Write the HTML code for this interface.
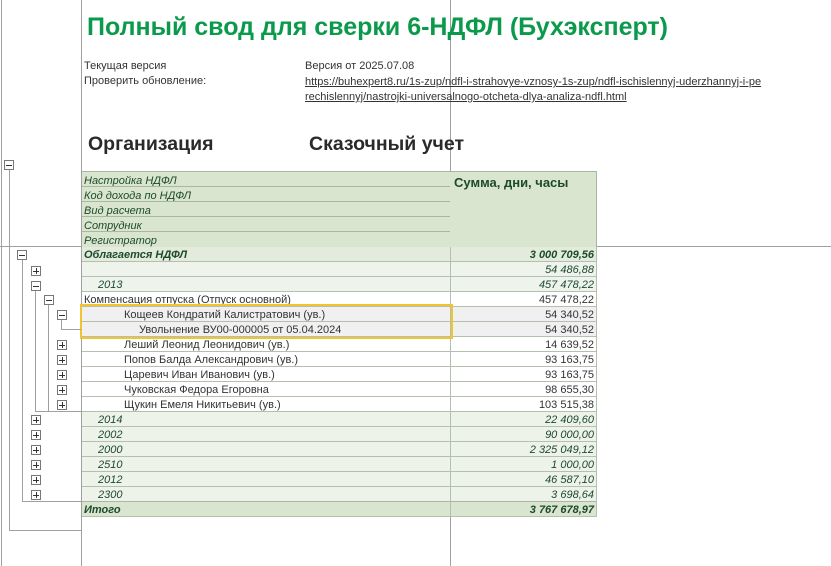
<!DOCTYPE html>
<html><head><meta charset="utf-8"><style>
body{margin:0;width:831px;height:566px;background:#fff;overflow:hidden;position:relative;font-family:"Liberation Sans",Arial,sans-serif;font-size:11px;color:#333}
.a{position:absolute}
.vl{position:absolute;width:1px;background:#a0a0a0}
.hl{position:absolute;height:1px;background:#a0a0a0}
.bx{position:absolute;width:8px;height:8px;border:1px solid #777;background:#fff}
.bx:before{content:"";position:absolute;left:1px;top:3.5px;width:6px;height:1px;background:#333}
.bx.p:after{content:"";position:absolute;left:3.5px;top:1px;width:1px;height:6px;background:#333}
.r{position:absolute;left:82px;width:514px;height:14px;border-bottom:1px solid #b4bfb0;line-height:15px;white-space:nowrap}
.r .l{position:absolute;left:2px;top:1px}
.r .v{position:absolute;right:2px;top:1px;text-align:right}
.r .s{position:absolute;left:368px;top:0;width:1px;height:15px;background:#b4bfb0}
.g{color:#1d4a2d;font-style:italic}
</style></head><body>
<div class="vl" style="left:1px;top:0;height:566px"></div>
<div class="vl" style="left:81px;top:0;height:566px"></div>
<div class="vl" style="left:450px;top:0;height:566px"></div>
<div class="hl" style="left:0;top:246px;width:831px"></div>

<div class="a" style="left:87px;top:13px;font-size:25px;font-weight:bold;color:#0b9a4b">Полный свод для сверки 6-НДФЛ (Бухэксперт)</div>
<div class="a" style="left:84px;top:60px">Текущая версия</div>
<div class="a" style="left:84px;top:75px">Проверить обновление:</div>
<div class="a" style="left:305px;top:60px">Версия от 2025.07.08</div>
<div class="a" style="left:305px;top:75px;text-decoration:underline;line-height:15px">https://buhexpert8.ru/1s-zup/ndfl-i-strahovye-vznosy-1s-zup/ndfl-ischislennyj-uderzhannyj-i-pe<br>rechislennyj/nastrojki-universalnogo-otcheta-dlya-analiza-ndfl.html</div>
<div class="a" style="left:88px;top:133px;font-size:19.5px;font-weight:bold;color:#2a2a2a">Организация</div>
<div class="a" style="left:309px;top:133px;font-size:19.5px;font-weight:bold;color:#2a2a2a">Сказочный учет</div>

<!-- header -->
<div class="a" style="left:82px;top:171px;width:514px;height:75px;background:#d9e5cf;border-top:1px solid #a9b5a5;border-right:1px solid #a9b5a5"></div>
<div class="a" style="left:454px;top:175px;font-size:13px;font-weight:bold;color:#1d4a2d">Сумма, дни, часы</div>
<div class="a g" style="left:84px;top:174px;line-height:15px">Настройка НДФЛ<br>Код дохода по НДФЛ<br>Вид расчета<br>Сотрудник<br>Регистратор</div>
<div class="hl" style="left:82px;top:186px;width:368px;background:#a9b5a5"></div>
<div class="hl" style="left:82px;top:201px;width:368px;background:#a9b5a5"></div>
<div class="hl" style="left:82px;top:216px;width:368px;background:#a9b5a5"></div>
<div class="hl" style="left:82px;top:231px;width:368px;background:#a9b5a5"></div>

<div class="r g" style="top:247px;background:#e3ecdc;font-weight:bold"><span class="l">Облагается НДФЛ</span><span class="s"></span><span class="v">3 000 709,56</span></div>
<div class="r g" style="top:262px;background:#eef4ec"><span class="s"></span><span class="v">54 486,88</span></div>
<div class="r g" style="top:277px;background:#eef4ec"><span class="l" style="left:16px">2013</span><span class="s"></span><span class="v">457 478,22</span></div>
<div class="r" style="top:292px"><span class="l">Компенсация отпуска (Отпуск основной)</span><span class="s"></span><span class="v">457 478,22</span></div>
<div class="r" style="top:307px;background:#f0f0f0"><span class="l" style="left:42px">Кощеев Кондратий Калистратович (ув.)</span><span class="s"></span><span class="v">54 340,52</span></div>
<div class="r" style="top:322px;background:#f0f0f0"><span class="l" style="left:57px">Увольнение ВУ00-000005 от 05.04.2024</span><span class="s"></span><span class="v">54 340,52</span></div>
<div class="r" style="top:337px"><span class="l" style="left:42px">Леший Леонид Леонидович (ув.)</span><span class="s"></span><span class="v">14 639,52</span></div>
<div class="r" style="top:352px"><span class="l" style="left:42px">Попов Балда Александрович (ув.)</span><span class="s"></span><span class="v">93 163,75</span></div>
<div class="r" style="top:367px"><span class="l" style="left:42px">Царевич Иван Иванович (ув.)</span><span class="s"></span><span class="v">93 163,75</span></div>
<div class="r" style="top:382px"><span class="l" style="left:42px">Чуковская Федора Егоровна</span><span class="s"></span><span class="v">98 655,30</span></div>
<div class="r" style="top:397px"><span class="l" style="left:42px">Щукин Емеля Никитьевич (ув.)</span><span class="s"></span><span class="v">103 515,38</span></div>
<div class="r g" style="top:412px;background:#eef3ea"><span class="l" style="left:16px">2014</span><span class="s"></span><span class="v">22 409,60</span></div>
<div class="r g" style="top:427px;background:#eef3ea"><span class="l" style="left:16px">2002</span><span class="s"></span><span class="v">90 000,00</span></div>
<div class="r g" style="top:442px;background:#eef3ea"><span class="l" style="left:16px">2000</span><span class="s"></span><span class="v">2 325 049,12</span></div>
<div class="r g" style="top:457px;background:#eef3ea"><span class="l" style="left:16px">2510</span><span class="s"></span><span class="v">1 000,00</span></div>
<div class="r g" style="top:472px;background:#eef3ea"><span class="l" style="left:16px">2012</span><span class="s"></span><span class="v">46 587,10</span></div>
<div class="r g" style="top:487px;background:#eef3ea"><span class="l" style="left:16px">2300</span><span class="s"></span><span class="v">3 698,64</span></div>
<div class="r g" style="top:501px;background:#d9e5cf;font-weight:bold;border-top:1px solid #a9b5a5"><span class="l">Итого</span><span class="s"></span><span class="v">3 767 678,97</span></div>
<div class="vl" style="left:596px;top:247px;height:270px;background:#b4bfb0"></div>

<div class="a" style="left:80px;top:304px;width:369px;height:31px;border:2px solid #f2c530"></div>

<!-- tree -->
<div class="vl" style="left:9px;top:169px;height:361px"></div>
<div class="hl" style="left:9px;top:530px;width:72px"></div>
<div class="bx" style="left:4px;top:160px"></div>
<div class="vl" style="left:22px;top:259px;height:242px"></div>
<div class="hl" style="left:22px;top:501px;width:59px"></div>
<div class="bx" style="left:17px;top:250px"></div>
<div class="bx p" style="left:31px;top:266px"></div>
<div class="vl" style="left:35px;top:290px;height:121px"></div>
<div class="hl" style="left:35px;top:411px;width:46px"></div>
<div class="bx" style="left:31px;top:281px"></div>
<div class="vl" style="left:48px;top:304px;height:107px"></div>
<div class="bx" style="left:44px;top:295px"></div>
<div class="vl" style="left:61px;top:319px;height:10px"></div>
<div class="hl" style="left:61px;top:329px;width:20px"></div>
<div class="bx" style="left:57px;top:310px"></div>
<div class="bx p" style="left:57px;top:340px"></div>
<div class="bx p" style="left:57px;top:355px"></div>
<div class="bx p" style="left:57px;top:370px"></div>
<div class="bx p" style="left:57px;top:385px"></div>
<div class="bx p" style="left:57px;top:400px"></div>
<div class="bx p" style="left:31px;top:415px"></div>
<div class="bx p" style="left:31px;top:430px"></div>
<div class="bx p" style="left:31px;top:445px"></div>
<div class="bx p" style="left:31px;top:460px"></div>
<div class="bx p" style="left:31px;top:475px"></div>
<div class="bx p" style="left:31px;top:490px"></div>
</body></html>
